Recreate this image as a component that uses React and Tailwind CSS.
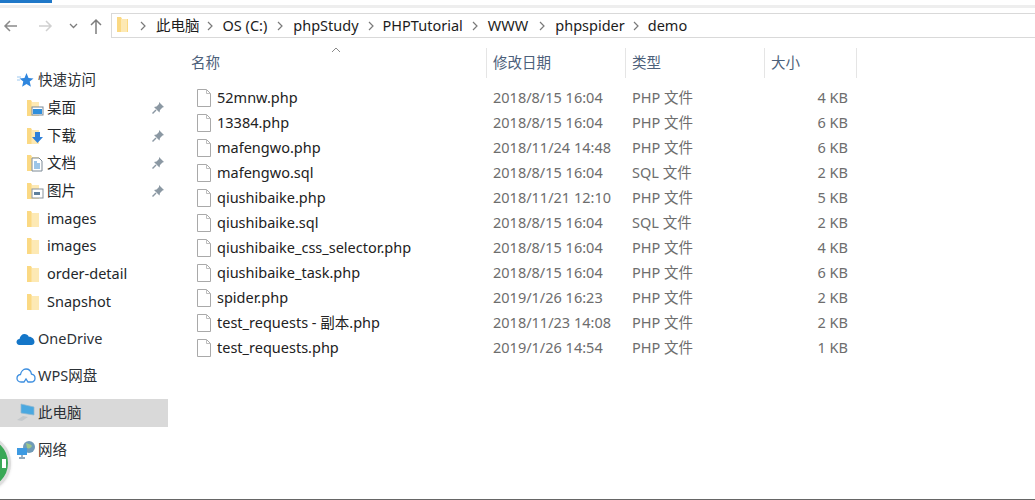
const SANS = { fontFamily: '"Noto Sans","Noto Sans CJK SC",sans-serif' };

const files = [
  ["52mnw.php", "2018/8/15 16:04", "PHP 文件", "4 KB"],
  ["13384.php", "2018/8/15 16:04", "PHP 文件", "6 KB"],
  ["mafengwo.php", "2018/11/24 14:48", "PHP 文件", "6 KB"],
  ["mafengwo.sql", "2018/8/15 16:04", "SQL 文件", "2 KB"],
  ["qiushibaike.php", "2018/11/21 12:10", "PHP 文件", "5 KB"],
  ["qiushibaike.sql", "2018/8/15 16:04", "SQL 文件", "2 KB"],
  ["qiushibaike_css_selector.php", "2018/8/15 16:04", "PHP 文件", "4 KB"],
  ["qiushibaike_task.php", "2018/8/15 16:04", "PHP 文件", "6 KB"],
  ["spider.php", "2019/1/26 16:23", "PHP 文件", "2 KB"],
  ["test_requests - 副本.php", "2018/11/23 14:08", "PHP 文件", "2 KB"],
  ["test_requests.php", "2019/1/26 14:54", "PHP 文件", "1 KB"],
];

const crumbs = [
  ["此电脑", "ml-[9px] mr-[6px]"],
  ["OS (C:)", "ml-[9px] mr-[9px]"],
  ["phpStudy", "ml-[9px] mr-[8px]"],
  ["PHPTutorial", "ml-[8px] mr-[8px]"],
  ["WWW", "ml-[9px] mr-[10px]"],
  ["phpspider", "ml-[9px] mr-[7px]"],
  ["demo", "ml-[8px]"],
];

function Folder({ overlay }) {
  return (
    <svg width="20" height="20" viewBox="0 0 20 20" className="shrink-0">
      <path d="M0 2h4l1 2h7v14H0z" fill="#fbd983" />
      <path d="M4.500 4H12v14H4.500z" fill="#fde9b4" />
      {overlay === "desktop" && (<g><rect x="5" y="9" width="11" height="8" fill="#fff" stroke="#7d8a96" /><rect x="6" y="11" width="9" height="5" fill="#2f8fdc" /></g>)}
      {overlay === "down" && <path d="M8 6h5v5h3l-5.500 6L5 11h3z" fill="#2f80d8" />}
      {overlay === "doc" && (<g><path d="M5 5h7l3 3v10H5z" fill="#fff" stroke="#7d8a96" /><path d="M7 9h3M7 11h6M7 13h6M7 15h6" stroke="#3b8bd0" /></g>)}
      {overlay === "pic" && (<g><rect x="5" y="8" width="11" height="9" fill="#fff" stroke="#8a949c" /><rect x="7" y="11" width="6" height="3" fill="#5e7f9c" /></g>)}
    </svg>
  );
}

function Pin() {
  return (
    <svg width="14" height="14" viewBox="0 0 14 14" className="shrink-0">
      <path d="M8 1l5 5-1.500.5-2.500 2.500-.5 2.500L3 6l2.500-.5L8 3z" fill="#8b98a3" />
      <path d="M5 9l-3.500 3.500" stroke="#8b98a3" strokeWidth="1.500" />
    </svg>
  );
}

function Star() {
  return (
    <svg width="17" height="17" viewBox="0 0 17 17" className="shrink-0">
      <path d="M9.500 1l2 5 5 .4-3.800 3.200 1.200 5.200-4.400-2.800-4.400 2.800 1.200-5.200L2.500 6.400l5-.4z" fill="#2f86de" />
      <path d="M0 5h4M0 8h3" stroke="#9cc8f0" />
    </svg>
  );
}

function OneDrive() {
  return (
    <svg width="19" height="14" viewBox="0 0 19 14" className="shrink-0">
      <path d="M3.500 13C1.500 13 .5 11.500.5 10S1.500 7 3.500 7C4 4 6 2 8.500 2c2 0 3.500 1 4.300 2.800C15.500 4.500 18.500 7 18.500 10c0 2-1.500 3-3 3z" fill="#1476c8" />
    </svg>
  );
}

function WpsCloud() {
  return (
    <svg width="20" height="15" viewBox="0 0 20 15" className="shrink-0">
      <path d="M5 14C2.500 14 1 12.300 1 10.200S2.500 6.800 4.500 6.500C5 3.500 7.300 1 10 1s5 2.200 5.500 5.200c2 .3 3.500 2 3.500 4S17.500 14 15 14H12L10 11l-2 3z" fill="none" stroke="#3c8ee0" strokeWidth="1.300" />
    </svg>
  );
}

function Computer() {
  return (
    <svg width="20" height="19" viewBox="0 0 20 19" className="shrink-0">
      <path d="M5 1l13 3v8L5 10z" fill="#4aa8e0" stroke="#8fb8d0" strokeWidth=".7" />
      <path d="M1 17l6-4 5 1-6 4z" fill="#c4c8cb" />
    </svg>
  );
}

function Network() {
  return (
    <svg width="20" height="20" viewBox="0 0 20 20" className="shrink-0">
      <circle cx="13" cy="7" r="6" fill="#6f9bb8" />
      <path d="M10 3c2 1 5 1 6 3-1 2-3 3-5 2z" fill="#9cc78b" />
      <rect x="1" y="8" width="10" height="7" fill="#3d9ae2" />
      <path d="M6 15v2M3 18h6" stroke="#6b8aa5" strokeWidth="1.300" />
    </svg>
  );
}

function FileIcon() {
  return (
    <svg width="16" height="20" viewBox="0 0 16 20" className="shrink-0">
      <path d="M1.500 1.500h9l4 4v13h-13z" fill="#fff" stroke="#a9a9a9" />
      <path d="M10.500 1.500v4h4" fill="none" stroke="#bdbdbd" />
    </svg>
  );
}

function Chevron() {
  return (
    <svg width="8" height="10" viewBox="0 0 8 10" className="shrink-0">
      <path d="M2 1l4 4-4 4" fill="none" stroke="#7a7a7a" strokeWidth="1.200" />
    </svg>
  );
}

function NavRow({ icon, label, pin }) {
  return (
    <div className="flex items-center h-[27.700px]">
      <div className="w-[47px] flex justify-end pr-[0px] shrink-0">{icon}</div>
      <span className="flex-1 whitespace-nowrap">{label}</span>
      {pin && <div className="pr-[3px]"><Pin /></div>}
    </div>
  );
}

function NavTop({ icon, label, active }) {
  return (
    <div className={`flex items-center h-[28px] pl-[16px] gap-[3px] ${active ? "bg-[#d9d9d9]" : ""}`}>
      <div className="w-[19px] flex justify-center shrink-0">{icon}</div>
      <span className="whitespace-nowrap text-[#2c3136]">{label}</span>
    </div>
  );
}

function Header({ label, w, sep = true }) {
  return (
    <div className={`h-[30px] flex items-center pl-[6px] shrink-0 text-[#4c607a] ${sep ? "border-l border-[#e5e5e5]" : ""} ${w}`}>
      {label}
    </div>
  );
}

export default function App() {
  return (
    <div className="relative w-[1035px] h-[500px] overflow-hidden bg-white text-[14.500px] text-[#1c1c1c] flex flex-col" style={SANS}>
      <div className="h-[3px] w-[52px] bg-[#1f78c8] shrink-0" />
      <div className="h-[3px] mt-[2px] bg-[#eeeeee] shrink-0" />
      <div className="flex items-center h-[25px] mt-[5px] shrink-0">
        <div className="w-[111px] h-full flex items-center pl-[2px] shrink-0">
          <svg width="106" height="20" viewBox="0 0 106 20">
            <path d="M15 10H3M8 5l-5 5 5 5" fill="none" stroke="#8a8a8a" strokeWidth="1.500" />
            <path d="M37 10h12M44 5l5 5-5 5" fill="none" stroke="#d0d0d0" strokeWidth="1.500" />
            <path d="M68 8l3.500 3.500L75 8" fill="none" stroke="#7d7d7d" strokeWidth="1.300" />
            <path d="M94 18V4M89 9l5-5 5 5" fill="none" stroke="#7d7d7d" strokeWidth="1.500" />
          </svg>
        </div>
        <div className="flex-1 h-full flex items-center border border-r-0 border-[#d9d9d9] pl-[5px]">
          <svg width="12" height="17" viewBox="0 0 12 17" className="shrink-0">
            <path d="M0 0h4l1 2h6v13H0z" fill="#fbd983" />
            <path d="M4 2h6v13H4z" fill="#fde9b4" />
          </svg>
          <div className="ml-[10px] flex items-center">
            <Chevron />
            {crumbs.map(([t, cls], i) => (
              <div key={t} className="flex items-center">
                <span className={`whitespace-nowrap ${cls}`}>{t}</span>
                {i < crumbs.length - 1 && <Chevron />}
              </div>
            ))}
          </div>
        </div>
      </div>

      <div className="flex flex-1 min-h-0">
        <div className="w-[168px] shrink-0 pt-[28px] text-[#23272b]">
          <NavTop icon={<Star />} label="快速访问" />
          <NavRow icon={<Folder overlay="desktop" />} label="桌面" pin />
          <NavRow icon={<Folder overlay="down" />} label="下载" pin />
          <NavRow icon={<Folder overlay="doc" />} label="文档" pin />
          <NavRow icon={<Folder overlay="pic" />} label="图片" pin />
          <NavRow icon={<Folder />} label="images" />
          <NavRow icon={<Folder />} label="images" />
          <NavRow icon={<Folder />} label="order-detail" />
          <NavRow icon={<Folder />} label="Snapshot" />
          <div className="h-[9px]" />
          <NavTop icon={<OneDrive />} label="OneDrive" />
          <div className="h-[9px]" />
          <NavTop icon={<WpsCloud />} label="WPS网盘" />
          <div className="h-[9px]" />
          <NavTop icon={<Computer />} label="此电脑" active />
          <div className="h-[9px]" />
          <NavTop icon={<Network />} label="网络" />
        </div>

        <div className="flex-1 min-w-0 pl-[17px] pt-[10px]">
          <div className="relative flex h-[30px]">
            <Header label="名称" w="w-[301px]" sep={false} />
            <Header label="修改日期" w="w-[139px]" />
            <Header label="类型" w="w-[139px]" />
            <Header label="大小" w="w-[92px]" />
            <div className="border-l border-[#e5e5e5] h-[30px]" />
            <svg width="10" height="6" viewBox="0 0 10 6" className="absolute left-[146px] -top-[1px]">
              <path d="M1 5l4-4 4 4" fill="none" stroke="#8a8a8a" />
            </svg>
          </div>
          <div className="mt-[7px]">
            {files.map(([name, date, type, size]) => (
              <div key={name} className="flex items-center h-[25px]">
                <div className="w-[301px] flex items-center pl-[11px] gap-[5px] shrink-0">
                  <FileIcon />
                  <span className="whitespace-nowrap text-[#222]">{name}</span>
                </div>
                <div className="w-[139px] pl-[7px] shrink-0 text-[#6d6d6d] whitespace-nowrap">{date}</div>
                <div className="w-[139px] pl-[7px] shrink-0 text-[#6d6d6d] whitespace-nowrap">{type}</div>
                <div className="w-[84px] text-right shrink-0 text-[#6d6d6d] whitespace-nowrap">{size}</div>
              </div>
            ))}
          </div>
        </div>
      </div>

      <div className="h-[1px] bg-[#666] shrink-0" />
      <div className="absolute -left-[45px] top-[435px] w-[56px] h-[56px] rounded-full bg-[#3aa856] border-[3px] border-[#dedede] shadow-sm flex items-center justify-end pr-[2px]">
        <div className="w-[4px] h-[9px] bg-white" />
      </div>
    </div>
  );
}
